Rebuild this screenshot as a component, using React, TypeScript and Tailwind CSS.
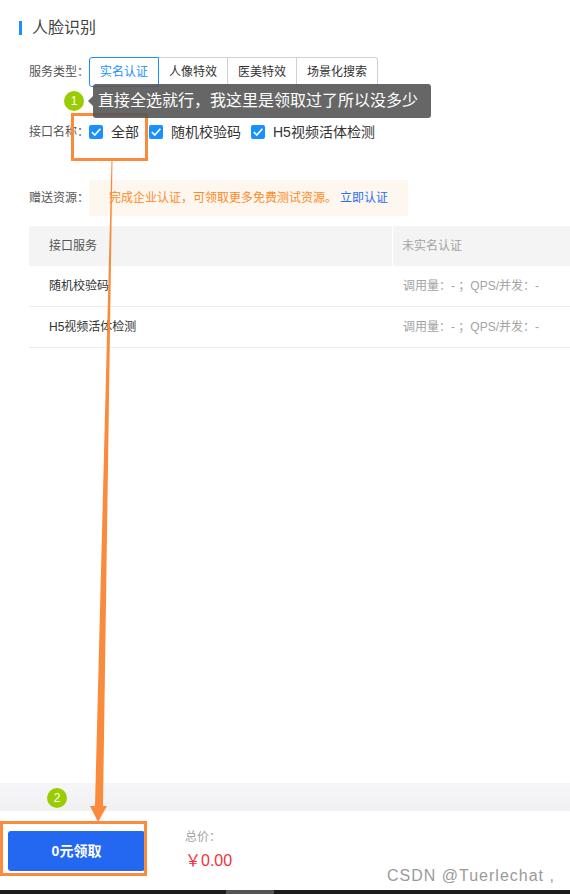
import React from "react";

const font = { fontFamily: '"Liberation Sans", "Noto Sans CJK SC", sans-serif' };
const COLON = "\uFF1A";
const COMMA = "\uFF0C";
const SEMI = "\uFF1B";
const YEN = "\uFFE5";

function Check({ label }: { label: string }) {
  return (
    <div className="flex items-center gap-[8px]">
      <span className="flex h-[14px] w-[14px] items-center justify-center rounded-[2px] bg-[#1890ff]">
        <svg width="12" height="12" viewBox="0 0 12 12" fill="none">
          <path d="M1.8 6 L4.8 9 L10.4 2.8" stroke="#fff" strokeWidth="1.7" />
        </svg>
      </span>
      <span className="text-[14px] leading-[20px] text-[#333]">{label}</span>
    </div>
  );
}

function Row({ name }: { name: string }) {
  return (
    <div className="flex h-[41px] border-b border-[#ebebeb]">
      <div className="flex w-[364px] items-center pl-[20px] text-[12px] text-[#333]">{name}</div>
      <div className="ml-[1px] flex flex-1 items-center whitespace-pre pl-[9px] text-[12px] text-[#a3a3a3]">
        {`调用量${COLON}- ${SEMI}QPS/并发${COLON}-`}
      </div>
    </div>
  );
}

export default function App() {
  return (
    <div className="relative flex h-[894px] w-[570px] flex-col overflow-hidden bg-white" style={font}>
      <div className="flex flex-1 flex-col">
        <div className="mt-[21px] flex h-[14px] items-center gap-[10px] pl-[19px]">
          <span className="h-[14px] w-[3px] bg-[#1890ff]" />
          <span className="text-[16px] text-[#444]">人脸识别</span>
        </div>

        <div className="mt-[22px] flex items-center pl-[29px]">
          <span className="w-[60px] text-[12px] text-[#555]">{`服务类型${COLON}`}</span>
          <div className="flex h-[30px] text-[12px] text-[#333]">
            <div className="flex w-[70px] items-center justify-center rounded-l-[3px] border border-[#1890ff] text-[#1890ff]">实名认证</div>
            <div className="flex w-[69px] items-center justify-center border-y border-r border-[#d0d0d0]">人像特效</div>
            <div className="flex w-[69px] items-center justify-center border-y border-r border-[#d0d0d0]">医美特效</div>
            <div className="flex w-[81px] items-center justify-center rounded-r-[3px] border-y border-r border-[#d0d0d0]">场景化搜索</div>
          </div>
        </div>

        <div className="mt-[35px] flex h-[20px] items-center pl-[29px]">
          <span className="w-[60px] text-[12px] text-[#555]">{`接口名称${COLON}`}</span>
          <div className="flex items-center gap-[10px]">
            <Check label="全部" />
            <Check label="随机校验码" />
            <Check label="H5视频活体检测" />
          </div>
        </div>

        <div className="mt-[38px] flex items-center pl-[29px]">
          <span className="w-[60px] text-[12px] text-[#555]">{`赠送资源${COLON}`}</span>
          <div className="flex h-[36px] w-[319px] items-center bg-[#fdf7f0] pl-[20px] text-[12px] text-[#ff8a1e]">
            {`完成企业认证${COMMA}可领取更多免费测试资源。`}
            <span className="ml-[3px] text-[#2b6ef6]">立即认证</span>
          </div>
        </div>

        <div className="ml-[29px] mt-[10px]">
          <div className="flex h-[40px]">
            <div className="flex w-[363px] items-center rounded-tl-[3px] bg-[#f4f4f4] pl-[20px] text-[12px] text-[#555]">接口服务</div>
            <div className="ml-[1px] flex flex-1 items-center bg-[#f4f4f4] pl-[9px] text-[12px] text-[#a3a3a3]">未实名认证</div>
          </div>
          <Row name="随机校验码" />
          <Row name="H5视频活体检测" />
        </div>
      </div>

      <div className="h-[28px] bg-gradient-to-b from-[#f6f6f8] to-[#f1f1f3]" />
      <div className="flex h-[79px] items-start bg-white">
        <button className="ml-[8px] mt-[20px] h-[40px] w-[137px] rounded-[3px] bg-[#2468f2] text-[14px] font-bold text-white">0元领取</button>
        <div className="ml-[40px] mt-[18px]">
          <div className="text-[12px] leading-[16px] text-[#a3a3a3]">{`总价${COLON}`}</div>
          <div className="mt-[6px] text-[16px] leading-[20px] text-[#f0323c]">{`${YEN}0.00`}</div>
        </div>
      </div>
      <div className="flex h-[4px] bg-[#1c1c1c]">
        <div className="ml-[226px] h-full w-[48px] bg-[#555]" />
      </div>

      {/* annotations */}
      <svg className="pointer-events-none absolute left-0 top-0" width="570" height="894" viewBox="0 0 570 894">
        <polygon points="111.5,160 112.5,160 103,806 107,806 98,822 90,806 95,806" fill="#fb8b3c" />
      </svg>
      <div className="absolute left-[71px] top-[113px] h-[48px] w-[77px] border-[3px] border-[#fb8b3c]" />
      <div className="absolute left-0 top-[821px] h-[55px] w-[147px] border-[3px] border-[#fb8b3c]" />

      <div className="absolute left-[64px] top-[91px] flex h-[20px] w-[20px] items-center justify-center rounded-full bg-[#9acd00] text-[12px] text-white">1</div>
      <div className="absolute left-[88px] top-[96px] h-0 w-0 border-y-[5px] border-r-[5px] border-y-transparent border-r-[#666]" />
      <div className="absolute left-[93px] top-[84px] flex h-[34px] w-[338px] items-center rounded-[3px] bg-[#555]/90 pl-[5px] text-[16px] text-white">
        {`直接全选就行${COMMA}我这里是领取过了所以没多少`}
      </div>
      <div className="absolute left-[47px] top-[788px] flex h-[20px] w-[20px] items-center justify-center rounded-full bg-[#9acd00] text-[12px] text-white">2</div>
      <div className="absolute left-[387px] top-[864px] text-[16px] tracking-[1px] text-[#9a9a9a]">CSDN @Tuerlechat ,</div>
    </div>
  );
}
